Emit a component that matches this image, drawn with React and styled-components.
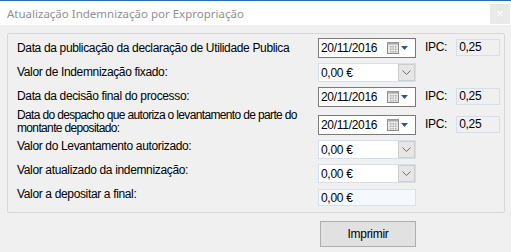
import React from 'react';
import styled, { createGlobalStyle } from 'styled-components';

const Global = createGlobalStyle`
	html, body {
		margin: 0;
		padding: 0;
		background: #f0f0f0;
	}
	* {
		box-sizing: border-box;
	}
`;

const Window = styled.div`
	width: 511px;
	height: 252px;
	background: #f0f0f0;
	border-top: 1px solid #2b6cb5;
	overflow: hidden;
`;

const TitleBar = styled.div`
	height: 24px;
	background: #ffffff;
	display: flex;
	align-items: center;
	justify-content: space-between;
	padding-left: 7px;
	padding-right: 1px;
`;

const Title = styled.span`
	font-family: 'Noto Sans', sans-serif;
	font-size: 11.5px;
	color: #8f8f8f;
	margin-top: 1px;
`;

const CloseBox = styled.div`
	align-self: flex-start;
	width: 20px;
	height: 20px;
	margin-top: 3px;
	background: #e9e9e9;
	color: #ffffff;
	font-family: 'Liberation Sans', sans-serif;
	font-size: 12px;
	display: flex;
	align-items: center;
	justify-content: center;
`;

const Body = styled.div`
	padding: 8px 7px 0 7px;
`;

const Group = styled.div`
	width: 498px;
	border: 1px solid #d8d8d8;
	border-radius: 2px;
	padding: 4px 0 6px 9px;
`;

const Row = styled.div`
	display: flex;
	align-items: flex-start;
	height: ${p => p.h}px;
	margin-top: ${p => p.gap || 0}px;
`;

const Label = styled.div`
	width: 301px;
	font-family: 'Liberation Sans', sans-serif;
	font-size: 12px;
	line-height: 13px;
	letter-spacing: ${p => (p.tight ? -0.65 : -0.35)}px;
	color: #000;
	margin-top: ${p => p.top}px;
`;

const Field = styled.div`
	width: 98px;
	height: ${p => p.h}px;
	display: flex;
	align-items: center;
	background: ${p => p.bg || '#fff'};
	border: 1px solid ${p => p.line};
	font-family: 'Liberation Sans', sans-serif;
	font-size: 12px;
	letter-spacing: -0.3px;
	color: #000;
	padding-left: 2px;
`;

const FieldText = styled.span`
	flex: 1;
`;

const DropButton = styled.div`
	width: 17px;
	height: 17px;
	background: #e6e6e6;
	border: 1px solid #cdcdcd;
	display: flex;
	align-items: center;
	justify-content: center;
`;

const PickerIcons = styled.div`
	display: flex;
	align-items: center;
	gap: 2px;
	margin-right: 7px;
`;

const Ipc = styled.div`
	display: flex;
	align-items: center;
	margin-left: 9px;
	height: 18px;
	gap: 9px;
	font-family: 'Liberation Sans', sans-serif;
	font-size: 12px;
	letter-spacing: -0.3px;
`;

const IpcValue = styled.div`
	width: 44px;
	height: 17px;
	border: 1px solid #d3dfec;
	background: #f0f0f0;
	display: flex;
	align-items: center;
	padding-left: 2px;
`;

const Footer = styled.div`
	display: flex;
	padding-left: 313px;
	padding-top: 8px;
`;

const Button = styled.button`
	width: 96px;
	height: 26px;
	background: #e1e1e1;
	border: 1px solid #adadad;
	font-family: 'Liberation Sans', sans-serif;
	font-size: 12px;
	letter-spacing: -0.3px;
	color: #000;
	padding: 0;
`;

const Calendar = () => (
	<svg width="12" height="12" viewBox="0 0 12 12">
		<rect x="0.5" y="0.5" width="11" height="11" fill="#e8e8e8" stroke="#8c8c8c" />
		<rect x="0.5" y="0.5" width="11" height="2" fill="#a8a8a8" />
		{[3, 5.5, 8].map(x =>
			[4, 6.5, 9].map(y => (
				<rect key={x + '-' + y} x={x} y={y} width="1.5" height="1.5" fill="#b0b0b0" />
			))
		)}
	</svg>
);

const Caret = () => (
	<svg width="7" height="4" viewBox="0 0 7 4">
		<path d="M0 0 L7 0 L3.5 4 Z" fill="#34558a" />
	</svg>
);

const Chevron = () => (
	<svg width="9" height="5" viewBox="0 0 9 5">
		<path d="M0.5 0.5 L4.5 4.5 L8.5 0.5" fill="none" stroke="#6d6d6d" strokeWidth="1" />
	</svg>
);

const DateRow = ({ label, top, gap, ipc, tight }) => (
	<Row h={20} gap={gap}>
		<Label top={top} tight={tight}>{label}</Label>
		<Field h={20} line="#7a7a7a">
			<FieldText>20/11/2016</FieldText>
			<PickerIcons>
				<Calendar />
				<Caret />
			</PickerIcons>
		</Field>
		{ipc && (
			<Ipc>
				<span>IPC:</span>
				<IpcValue>{ipc}</IpcValue>
			</Ipc>
		)}
	</Row>
);

const ComboRow = ({ label, top, gap }) => (
	<Row h={19} gap={gap}>
		<Label top={top}>{label}</Label>
		<Field h={19} line="#d6dfe9">
			<FieldText>0,00 €</FieldText>
			<DropButton>
				<Chevron />
			</DropButton>
		</Field>
	</Row>
);

export default function App() {
	return (
		<>
			<Global />
			<Window>
				<TitleBar>
					<Title>Atualização Indemnização por Expropriação</Title>
					<CloseBox>×</CloseBox>
				</TitleBar>
				<Body>
					<Group>
						<DateRow label="Data da publicação da declaração de Utilidade Publica" top={4} ipc="0,25" />
						<ComboRow label="Valor de Indemnização fixado:" top={3} gap={5} />
						<DateRow label="Data da decisão final do processo:" top={3} gap={5} ipc="0,25" />
						<DateRow
							label={<>Data do despacho que autoriza o levantamento de parte do<br />montante depositado:</>}
							top={-6}
							gap={8}
							ipc="0,25"
							tight
						/>
						<ComboRow label="Valor do Levantamento autorizado:" top={0} gap={5} />
						<ComboRow label="Valor atualizado da indemnização:" top={0} gap={5} />
						<Row h={17} gap={6}>
							<Label top={-1}>Valor a depositar a final:</Label>
							<Field h={17} line="#d6e1ee" bg="#f5f8fc">
								<FieldText>0,00 €</FieldText>
							</Field>
						</Row>
					</Group>
					<Footer>
						<Button>Imprimir</Button>
					</Footer>
				</Body>
			</Window>
		</>
	);
}
